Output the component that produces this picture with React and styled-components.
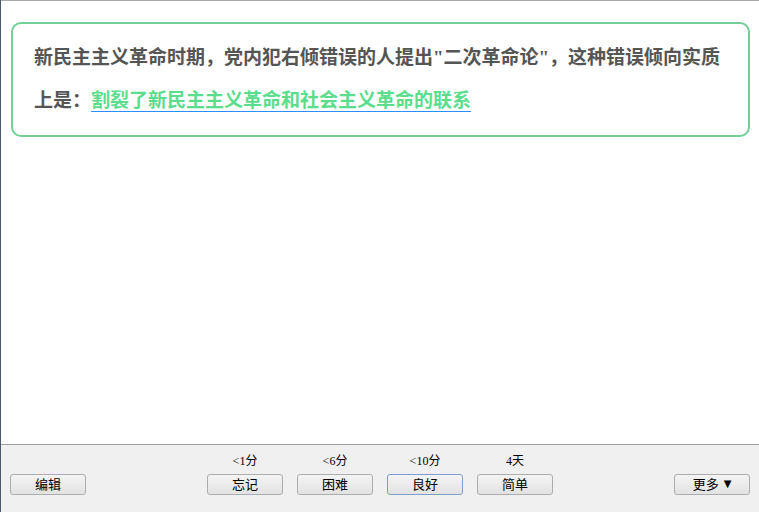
import React from "react";
import styled, { createGlobalStyle } from "styled-components";

const GlobalStyle = createGlobalStyle`
  html, body, #root {
    height: 100%;
    margin: 0;
  }
  body {
    background: #ffffff;
    font-family: "Liberation Sans", "Noto Sans CJK SC", sans-serif;
  }
`;

const intervals = [
  { id: 1, due: "<1分", label: "忘记" },
  { id: 2, due: "<6分", label: "困难" },
  { id: 3, due: "<10分", label: "良好", isDefault: true },
  { id: 4, due: "4天", label: "简单" },
];

const App = () => {
  return (
    <>
      <GlobalStyle />
      <Window>
        <Reviewer>
          <Card>
            新民主主义革命时期，党内犯右倾错误的人提出"二次革命论"，这种错误倾向实质上是：
            <Answer>割裂了新民主主义革命和社会主义革命的联系</Answer>
          </Card>
        </Reviewer>
        <BottomBar>
          <Side>
            <Button>编辑</Button>
          </Side>
          <Ease>
            {intervals.map((item) => (
              <EaseColumn key={item.id}>
                <Due>{item.due}</Due>
                <Button $default={item.isDefault}>{item.label}</Button>
              </EaseColumn>
            ))}
          </Ease>
          <Side $right>
            <Button>
              更多<Arrow>▼</Arrow>
            </Button>
          </Side>
        </BottomBar>
      </Window>
    </>
  );
};

const Window = styled.div`
  height: 100%;
  display: flex;
  flex-direction: column;
  border-left: 1px solid #4b5a6a;
  box-sizing: border-box;
`;

const Reviewer = styled.div`
  flex: 1;
  border-top: 1px solid #a9a9a9;
  background: #ffffff;
  padding: 21px 9px 0 10px;
`;

const Card = styled.div`
  border: 2px solid #72cf96;
  border-radius: 10px;
  padding: 12px 21px 13px 21px;
  font-family: "Liberation Serif", "Noto Sans CJK SC", serif;
  font-size: 19px;
  font-weight: bold;
  line-height: 43px;
  color: #555555;
`;

const Answer = styled.span`
  display: inline-block;
  line-height: 21px;
  color: #5add8c;
  border-bottom: 1px solid #2b8fff;
`;

const BottomBar = styled.div`
  height: 68px;
  box-sizing: border-box;
  border-top: 1px solid #a0a0a0;
  background: #f0f0f0;
  display: grid;
  grid-template-columns: 1fr auto 1fr;
  align-items: end;
  padding: 0 9px 17px 9px;
`;

const Side = styled.div`
  display: flex;
  justify-content: ${(p) => (p.$right ? "flex-end" : "flex-start")};
`;

const Ease = styled.div`
  display: flex;
  gap: 14px;
`;

const EaseColumn = styled.div`
  display: flex;
  flex-direction: column;
  align-items: center;
  gap: 6px;
`;

const Due = styled.div`
  font-family: "Liberation Serif", "Noto Sans CJK SC", serif;
  font-size: 12px;
  line-height: 14px;
  color: #000000;
`;

const Button = styled.button`
  width: 76px;
  height: 21px;
  padding: 0 0 2px;
  box-sizing: border-box;
  display: flex;
  align-items: center;
  justify-content: center;
  border: 1px solid ${(p) => (p.$default ? "#7c9fcf" : "#adadad")};
  border-radius: 3px;
  background: linear-gradient(#f4f4f4, #e2e2e2);
  font-family: "Noto Sans CJK SC", sans-serif;
  font-size: 13px;
  line-height: 17px;
  color: #000000;
  cursor: pointer;
`;

const Arrow = styled.span`
  font-family: "DejaVu Sans", sans-serif;
  font-size: 10px;
  margin-left: 5px;
  line-height: 17px;
`;

export default App;
